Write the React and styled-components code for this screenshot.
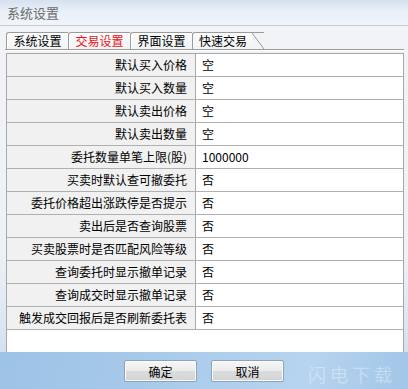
import React from 'react';
import styled, { createGlobalStyle } from 'styled-components';

const Global = createGlobalStyle`
  html, body {
    margin: 0;
    padding: 0;
    width: 408px;
    height: 389px;
    overflow: hidden;
  }
  body {
    font-family: "Noto Sans CJK SC", "Liberation Sans", sans-serif;
    font-size: 12px;
  }
`;

const Window = styled.div`
  width: 408px;
  height: 389px;
  display: flex;
  flex-direction: column;
  background: #eef1f5;
`;

const TitleBar = styled.div`
  height: 25px;
  border-bottom: 1px solid #c3cbd5;
  background: linear-gradient(#d5e1ef, #e9f0f8 45%, #f1f5fa);
  display: flex;
  align-items: center;
  padding-left: 7px;
  font-size: 13px;
  color: #6a6a6a;
`;

const Client = styled.div`
  flex: 1;
  display: flex;
  flex-direction: column;
  padding: 6px 4px 0 5px;
  background: linear-gradient(#f1f3f6, #eef1f5 70%, #d3e2f0);
`;

const TabStrip = styled.div`
  display: flex;
  height: 17px;
  padding-left: 1px;
`;

const Tab = styled.div`
  width: 62px;
  box-sizing: border-box;
  height: 17px;
  line-height: 16px;
  text-align: center;
  border-top: 1px solid #9b9b9b;
  border-left: 1px solid #9b9b9b;
  border-top-left-radius: 3px;
  background: linear-gradient(#fbfbfc, #f2f3f5);
  box-shadow: inset 1px 1px 0 #ffffff;
  color: ${p => (p.$active ? '#e8141c' : '#000')};
`;

const LastTab = styled(Tab)`
  width: 72px;
  padding-right: 11px;
  box-shadow: none;
  background:
    linear-gradient(to top right, #f3f4f6 calc(50% - 0.7px), #8e8e8e 50%, transparent calc(50% + 0.7px)) right top / 12px 100% no-repeat,
    linear-gradient(#fbfbfc, #f2f3f5) left top / calc(100% - 12px) 100% no-repeat;
`;

const Panel = styled.div`
  flex: 1;
  display: flex;
  flex-direction: column;
  border-top: 1px solid #9d9d9d;
  box-shadow: inset 0 1px 0 #ffffff;
  padding: 3px 0 0 1px;
`;

const Grid = styled.div`
  flex: 1;
  width: 398px;
  box-sizing: border-box;
  background: #fff;
  border-left: 1px solid #a8a8a8;
  border-right: 1px solid #a8a8a8;
  border-top: 1px solid #a8a8a8;
  display: grid;
  grid-template-columns: 189px 1fr;
  grid-auto-rows: 23px;
  align-content: start;
`;

const Label = styled.div`
  background: #f1f1f1;
  border-right: 1px solid #a8a8a8;
  border-bottom: 1px solid #b0b0b0;
  text-align: right;
  padding-right: 8px;
  line-height: 22px;
  color: #000;
  white-space: nowrap;
`;

const Value = styled.div`
  border-bottom: 1px solid #b0b0b0;
  padding-left: 6px;
  line-height: 22px;
  color: #000;
`;

const ButtonBar = styled.div`
  position: relative;
  height: 37px;
  display: flex;
  justify-content: center;
  align-items: flex-start;
  gap: 14px;
  padding-top: 8px;
  box-sizing: border-box;
  background: linear-gradient(100deg, #9cc2e6, #a9cbea 40%, #b6d4ef 75%, #a2c6e8);
`;

const Button = styled.button`
  width: 73px;
  height: 22px;
  padding: 0;
  font-family: "Noto Sans CJK SC", "Liberation Sans", sans-serif;
  font-size: 12px;
  color: #000;
  border: 1px solid #8fa3b8;
  border-radius: 2px;
  background: linear-gradient(#f6f6f6, #ebebeb 50%, #dcdcdc 51%, #d2d4d6);
  box-shadow: inset 0 0 0 1px #fbfbfb;
`;

const Watermark = styled.div`
  position: absolute;
  right: 12px;
  top: 9px;
  font-size: 18px;
  letter-spacing: 4px;
  color: rgba(255, 255, 255, 0.35);
`;

const rows = [
  ['默认买入价格', '空'],
  ['默认买入数量', '空'],
  ['默认卖出价格', '空'],
  ['默认卖出数量', '空'],
  ['委托数量单笔上限(股)', '1000000'],
  ['买卖时默认查可撤委托', '否'],
  ['委托价格超出涨跌停是否提示', '否'],
  ['卖出后是否查询股票', '否'],
  ['买卖股票时是否匹配风险等级', '否'],
  ['查询委托时显示撤单记录', '否'],
  ['查询成交时显示撤单记录', '否'],
  ['触发成交回报后是否刷新委托表', '否'],
];

const App = () => {
  return (
    <Window>
      <Global />
      <TitleBar>系统设置</TitleBar>
      <Client>
        <TabStrip>
          <Tab>系统设置</Tab>
          <Tab $active>交易设置</Tab>
          <Tab>界面设置</Tab>
          <LastTab>快速交易</LastTab>
        </TabStrip>
        <Panel>
          <Grid>
            {rows.map(([label, value]) => (
              <React.Fragment key={label}>
                <Label>{label}</Label>
                <Value>{value}</Value>
              </React.Fragment>
            ))}
          </Grid>
        </Panel>
      </Client>
      <ButtonBar>
        <Button>确定</Button>
        <Button>取消</Button>
        <Watermark>闪电下载</Watermark>
      </ButtonBar>
    </Window>
  );
};

export default App;
